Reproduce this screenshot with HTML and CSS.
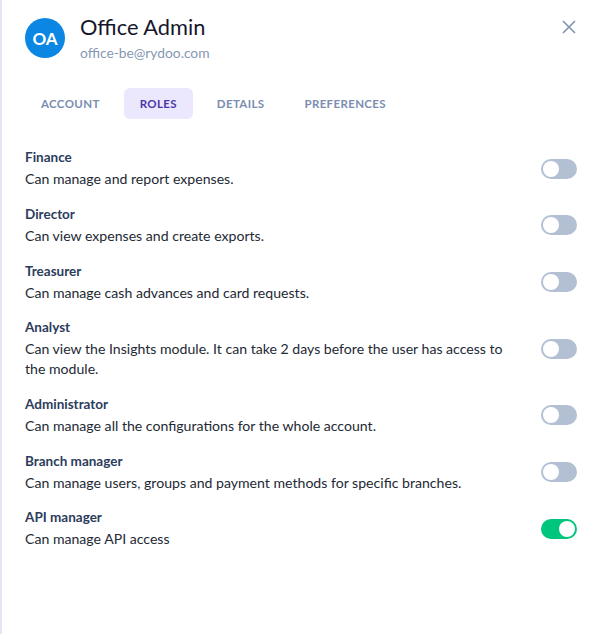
FILE: index.html
```html
<!DOCTYPE html>
<html lang="en">
<head>
    <meta charset="UTF-8">
    <title>Office Admin - Roles</title>
    <link rel="stylesheet" href="styles.css">
</head>
<body>
<div class="panel">
    <div class="head">
        <div class="avatar">OA</div>
        <div class="who">
            <div class="name">Office Admin</div>
            <div class="mail">office-be@rydoo.com</div>
        </div>
        <a class="close" href="#">
            <svg width="14" height="14" viewBox="0 0 14 14"><path d="M1 1L13 13M13 1L1 13" stroke="#7f93b0" stroke-width="1.6" fill="none"/></svg>
        </a>
    </div>
    <ul class="tabs">
        <li>Account</li>
        <li class="on">Roles</li>
        <li>Details</li>
        <li>Preferences</li>
    </ul>
    <div class="roles">
        <div class="role">
            <div class="txt">
                <h4>Finance</h4>
                <p>Can manage and report expenses.</p>
            </div>
            <span class="switch"></span>
        </div>
        <div class="role">
            <div class="txt">
                <h4>Director</h4>
                <p>Can view expenses and create exports.</p>
            </div>
            <span class="switch"></span>
        </div>
        <div class="role">
            <div class="txt">
                <h4>Treasurer</h4>
                <p>Can manage cash advances and card requests.</p>
            </div>
            <span class="switch"></span>
        </div>
        <div class="role">
            <div class="txt">
                <h4>Analyst</h4>
                <p>Can view the Insights module. It can take 2 days before the user has access to the module.</p>
            </div>
            <span class="switch"></span>
        </div>
        <div class="role">
            <div class="txt">
                <h4>Administrator</h4>
                <p>Can manage all the configurations for the whole account.</p>
            </div>
            <span class="switch"></span>
        </div>
        <div class="role">
            <div class="txt">
                <h4>Branch manager</h4>
                <p>Can manage users, groups and payment methods for specific branches.</p>
            </div>
            <span class="switch"></span>
        </div>
        <div class="role">
            <div class="txt">
                <h4>API manager</h4>
                <p>Can manage API access</p>
            </div>
            <span class="switch on"></span>
        </div>
    </div>
</div>
</body>
</html>
```

FILE: styles.css
```css
*{
    margin: 0;
    padding: 0;
    list-style: none;
    box-sizing: border-box;
}
html,body{
    width: 100%;
    height: 100%;
    background: #fff;
}
body{
    font-family: Lato, "Liberation Sans", sans-serif;
}
.panel{
    min-height: 100%;
    border-left: 2px solid #e3e7f0;
    padding: 14px 30px 0 23px;
}
.head{
    display: flex;
    align-items: center;
}
.avatar{
    width: 40px;
    height: 40px;
    border-radius: 50%;
    background: #0b86e3;
    color: #fff;
    font-weight: bold;
    font-size: 17px;
    display: flex;
    align-items: center;
    justify-content: center;
    margin-right: 15px;
}
.who{
    flex: 1;
}
.name{
    font-size: 21.8px;
    line-height: 26px;
    color: #15162b;
}
.mail{
    margin-top: 4px;
    font-size: 13.8px;
    line-height: 18px;
    color: #8798b4;
}
.close{
    align-self: flex-start;
    margin-top: 6px;
    margin-right: 1px;
    display: block;
    line-height: 0;
}
.tabs{
    display: flex;
    gap: 8px;
    margin-top: 26px;
}
.tabs li{
    height: 31px;
    line-height: 31px;
    padding: 0 16px;
    border-radius: 6px;
    font-size: 11.5px;
    letter-spacing: 0.35px;
    font-weight: bold;
    text-transform: uppercase;
    color: #7b8db0;
}
.tabs li.on{
    background: #ebe7fd;
    color: #4b36a8;
}
.roles{
    margin-top: 21.5px;
}
.role{
    display: flex;
    align-items: center;
    padding: 7.83px 0;
}
.role .txt{
    flex: 1;
    padding-right: 30px;
}
.role h4{
    font-size: 13.5px;
    line-height: 18px;
    margin-bottom: 3px;
    color: #2c3c5c;
}
.role p{
    font-size: 14.1px;
    line-height: 20px;
    color: #232934;
}
.switch{
    position: relative;
    width: 36px;
    height: 20px;
    border-radius: 10px;
    background: #b3c0d4;
    flex-shrink: 0;
}
.switch:after{
    content: '';
    position: absolute;
    left: 2px;
    top: 2px;
    width: 16px;
    height: 16px;
    border-radius: 50%;
    background: #fff;
}
.switch.on{
    background: #00c57c;
}
.switch.on:after{
    left: 18px;
}
```
